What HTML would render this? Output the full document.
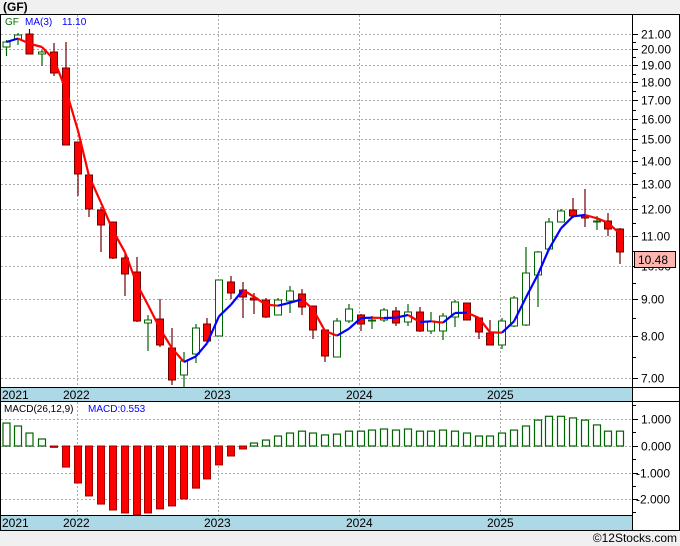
<!DOCTYPE html>
<html><head><meta charset="utf-8"><style>
html,body{margin:0;padding:0;background:#f0f0f0;width:680px;height:546px;overflow:hidden}
svg{display:block}
text{font-family:"Liberation Sans",sans-serif}
</style></head><body>
<svg id="s" width="680" height="546" xmlns="http://www.w3.org/2000/svg">
<rect x="0" y="0" width="680" height="546" fill="#f0f0f0"/>
<text x="3" y="11" font-size="12" font-weight="bold" fill="#000">(GF)</text>
<rect x="0.5" y="14.5" width="679" height="516" fill="#fff" stroke="#000"/>
<g id="g"></g>
<text x="677" y="542" font-size="12" fill="#000" text-anchor="end">©12Stocks.com</text>
</svg>
<script>
var g=document.getElementById('g'),h='';
function L(x1,y1,x2,y2,c,w,d){h+='<line x1="'+x1+'" y1="'+y1+'" x2="'+x2+'" y2="'+y2+'" stroke="'+c+'" stroke-width="'+(w||1)+'"'+(d?' stroke-dasharray="'+d+'"':'')+'/>';}
function T(x,y,t,c,s,a){h+='<text x="'+x+'" y="'+y+'" font-size="'+(s||11)+'" fill="'+c+'"'+(a?' text-anchor="'+a+'"':'')+'>'+t+'</text>';}
function py(p){return 34+313*(Math.log(21)-Math.log(p));}
// grids price
var lv=[21,20,19,18,17,16,15,14,13,12,11,10,9,8,7];
lv.forEach(function(p){var y=Math.round(py(p))+.5;L(1,y,632,y,'#aaa',1,'2,2');L(632,y,638,y,'#000');T(641,y+4,p.toFixed(2),'#000',12);});
for(var i=0;i<lv.length-1;i++){var y=Math.round((py(lv[i])+py(lv[i+1]))/2)+.5;L(632,y,636,y,'#000');}
[77,218,359,500].forEach(function(x){L(x+.5,15,x+.5,387,'#aaa',1,'2,2');L(x+.5,402,x+.5,515,'#aaa',1,'2,2');});
// macd grid
[[419,'1.000'],[446,'0.000'],[473,'-1.000'],[499,'-2.000']].forEach(function(a){var y=a[0]+.5;L(1,y,632,y,'#aaa',1,'2,2');L(632,y,638,y,'#000');T(a[1][0]=='-'?636:641,y+4,a[1],'#000',12);});
[405,432,459,486,512].forEach(function(y){L(632,y+.5,636,y+.5,'#000');});
// date bars
h+='<rect x="1" y="387" width="631" height="15" fill="#add8e6"/><rect x="1" y="515" width="631" height="15" fill="#add8e6"/>';
L(0,387.5,680,387.5,'#000');L(0,401.5,680,401.5,'#000');L(0,515.5,632,515.5,'#000');L(0,530.5,632,530.5,'#000');
L(632.5,15,632.5,531,'#000');
[[2,'2021'],[63,'2022'],[204,'2023'],[346,'2024'],[487,'2025']].forEach(function(a){T(a[0],399,a[1],'#000',12);T(a[0],527,a[1],'#000',12);});
// candles: x,up,bt,bb,wt,wb
var C=[[6.5,1,42,47,40,56],[18,1,35,39,33,45],[29.5,0,34,54,29,54],[42,1,52,54,50,66],[54,0,52,73,43,76],[66,0,68,145,42,145],
[78,0,142,174,142,196],[89,0,175,209,175,217],[101,0,210,225,207,252],[113,0,222,258,222,259],[125,0,258,274,253,296],[137,0,272,321,257,322],
[148,1,320,323,315,351],[160,0,319,345,299,347],[172,0,348,380,328,385],[184,1,361,375,352,387],[196,1,328,354,324,363],[207,0,324,341,318,343],
[219,1,280,336,280,336],[231,0,282,293,276,299],[243,0,290,297,282,318],[254,0,298,300,293,314],[266,0,300,317,298,318],[278,1,300,315,298,315],
[290,1,291,301,286,313],[302,0,294,307,289,315],[313,0,306,330,306,339],[325,0,330,356,330,362],[337,1,321,357,318,357],[349,1,309,321,304,323],
[361,0,315,324,314,331],[372,1,320,321,316,329],[384,1,310,320,308,322],[396,0,311,323,307,326],[408,1,312,322,304,326],[420,0,312,331,307,332],
[431,1,321,331,312,334],[443,1,316,331,313,340],[455,1,302,317,300,327],[467,0,303,320,303,320],[479,0,318,332,318,339],[490,0,333,345,320,345],
[502,1,321,345,318,349],[514,1,298,326,296,327],[526,1,273,325,247,326],[538,1,252,275,251,307],[549,1,222,249,218,249],[561,1,211,222,209,222],
[573,0,210,216,198,218],[585,0,216,218,189,227],[597,1,221,222,216,230],[608,0,221,229,213,236],[620,0,229,252,228,264]];
C.forEach(function(c){var col=c[1]?'#006400':'#700000';L(c[0],c[4],c[0],c[5],col,1.2);
var bh=Math.max(c[3]-c[2],1);h+='<rect x="'+(c[0]-3.5)+'" y="'+c[2]+'" width="7" height="'+bh+'" fill="'+(c[1]?'#fff':'#f00')+'" stroke="'+col+'" stroke-width="1"/>';});
// MA
var cl=C.map(function(c){return c[1]?c[2]:c[3];});var ma=[];
for(var i=0;i<C.length;i++){var a=cl.slice(Math.max(0,i-2),i+1);ma.push(a.reduce(function(s,v){return s+v;},0)/a.length);}
for(var i=1;i<C.length;i++){L(C[i-1][0],ma[i-1],C[i][0],ma[i],ma[i]<ma[i-1]?'#0000ff':'#ff0000',2.2);}
// MACD
var M=[.85,.74,.48,.26,-.05,-.78,-1.37,-1.85,-2.15,-2.37,-2.48,-2.55,-2.48,-2.33,-2.22,-1.96,-1.56,-1.22,-.7,-.37,-.11,.11,.22,.37,.48,.55,.48,.41,.44,.55,.55,.59,.63,.59,.63,.55,.55,.59,.55,.48,.37,.37,.48,.59,.74,.96,1.1,1.1,1.04,.96,.78,.55,.55];
M.forEach(function(v,i){var x=C[i][0],y0=446,y1=446-v*27;var t=Math.min(y0,y1),hh=Math.abs(y1-y0);
if(v>0)h+='<rect x="'+(x-3.5)+'" y="'+t+'" width="7" height="'+hh+'" fill="#fff" stroke="#006400" stroke-width="1.2"/>';
else h+='<rect x="'+(x-3.5)+'" y="'+t+'" width="7" height="'+hh+'" fill="#f00" stroke="#a00000" stroke-width="1"/>';});
// labels
T(5,25,'GF','#007000',10);T(25,25,'MA(3)','#0000ff',10);T(62,25,'11.10','#0000ff',10);
T(4,412,'MACD(26,12,9)','#000',10);T(88,412,'MACD:0.553','#0000ff',10);
h+='<rect x="634.5" y="251.5" width="41" height="16" fill="#ffb6b0" stroke="#000"/>';T(638,264,'10.48','#000',12);
g.innerHTML=h;
</script>
</body></html>
